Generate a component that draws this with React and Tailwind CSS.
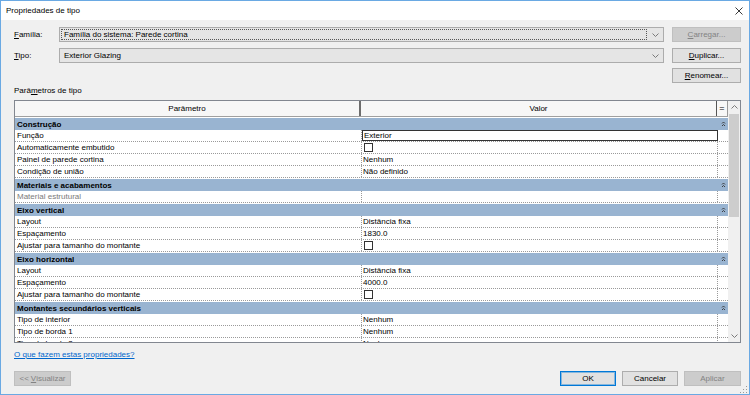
import React from 'react'

const groups = [
  {
    title: 'Construção',
    rows: [
      { label: 'Função', value: 'Exterior', selected: true },
      { label: 'Automaticamente embutido', check: true },
      { label: 'Painel de parede cortina', value: 'Nenhum' },
      { label: 'Condição de união', value: 'Não definido' },
    ],
  },
  {
    title: 'Materiais e acabamentos',
    rows: [{ label: 'Material estrutural', value: '', disabled: true }],
  },
  {
    title: 'Eixo vertical',
    rows: [
      { label: 'Layout', value: 'Distância fixa' },
      { label: 'Espaçamento', value: '1830.0' },
      { label: 'Ajustar para tamanho do montante', check: true },
    ],
  },
  {
    title: 'Eixo horizontal',
    rows: [
      { label: 'Layout', value: 'Distância fixa' },
      { label: 'Espaçamento', value: '4000.0' },
      { label: 'Ajustar para tamanho do montante', check: true },
    ],
  },
  {
    title: 'Montantes secundários verticais',
    rows: [
      { label: 'Tipo de interior', value: 'Nenhum' },
      { label: 'Tipo de borda 1', value: 'Nenhum' },
      { label: 'Tipo de borda 2', value: 'Nenhum' },
    ],
  },
]

const ChevronDown = () => (
  <svg width="7" height="4" viewBox="0 0 7 4" className="shrink-0">
    <path d="M0.5 0.5 L3.5 3.5 L6.5 0.5" fill="none" stroke="#7a7a7a" strokeWidth="1" />
  </svg>
)

const ChevronUp = () => (
  <svg width="7" height="4" viewBox="0 0 7 4">
    <path d="M0.5 3.5 L3.5 0.5 L6.5 3.5" fill="none" stroke="#7a7a7a" strokeWidth="1" />
  </svg>
)

// double chevron on group rows
const Collapse = () => (
  <svg width="5" height="6" viewBox="0 0 5 6">
    <path d="M1 2.5 L2.5 1 L4 2.5 M1 5 L2.5 3.5 L4 5" fill="none" stroke="#333" strokeWidth="0.9" />
  </svg>
)

const Button = ({ children, disabled, primary, className = '' }) => (
  <div
    className={`h-[15px] flex items-center justify-center border ${
      disabled
        ? 'bg-[#cccccc] border-[#bfbfbf] text-[#838383]'
        : primary
        ? 'bg-[#e1e1e1] border-[#0078d7] ring-1 ring-inset ring-[#0078d7]/40'
        : 'bg-[#e1e1e1] border-[#adadad]'
    } ${className}`}
  >
    {children}
  </div>
)

const Combo = ({ children, focused }) => (
  <div className="w-[605px] h-[15px] flex items-center bg-[#e5e5e5] border border-[#acacac] pr-[4px]">
    <div
      className={`flex-1 h-[11px] ml-[1px] mr-[5px] flex items-center pl-[2px] ${
        focused ? 'border border-dotted border-[#555]' : 'border border-transparent'
      }`}
    >
      {children}
    </div>
    <ChevronDown />
  </div>
)

const DataRow = ({ row }) => (
  <div className="h-[12px] flex shrink-0 border-b border-dotted border-[#9a9a9a] bg-white">
    <div
      className={`w-[347px] shrink-0 pl-[2px] leading-[11px] border-r border-dotted border-[#9a9a9a] ${
        row.disabled ? 'text-[#7a7a7a]' : ''
      }`}
    >
      {row.label}
    </div>
    {row.selected ? (
      <div className="w-[356px] shrink-0 pl-[1px] leading-[9px] border border-[#333]">{row.value}</div>
    ) : (
      <div className="w-[356px] shrink-0 pl-[1px] leading-[11px] border-r border-dotted border-[#9a9a9a] flex items-center">
        {row.check ? (
          <div className="w-[9px] h-[9px] ml-[1px] border border-[#333] bg-white" />
        ) : (
          row.value
        )}
      </div>
    )}
    <div className="flex-1" />
  </div>
)

const GroupRow = ({ title }) => (
  <div className="h-[13px] flex shrink-0 items-center bg-[#99b4d1] border-t border-white font-bold pl-[2px]">
    <div className="flex-1 leading-[11px]">{title}</div>
    <div className="w-[10px] flex justify-center">
      <Collapse />
    </div>
  </div>
)

export default function App() {
  return (
    <div className="w-[750px] h-[395px] flex flex-col overflow-hidden bg-[#f0f0f0] border border-[#6aa9e3] text-[8px] text-black font-['Liberation_Sans',Arial,sans-serif]">
      <div className="h-[19px] shrink-0 bg-white flex items-center justify-between pl-[5px] pr-[6px]">
        <span className="text-[8px]">Propriedades de tipo</span>
        <svg width="8" height="8" viewBox="0 0 8 8">
          <path d="M0.5 0.5 L7.5 7.5 M7.5 0.5 L0.5 7.5" stroke="#222" strokeWidth="0.9" />
        </svg>
      </div>

      <div className="flex flex-col pl-[13px] pr-[8px]">
        <div className="mt-[7px] h-[15px] flex items-center">
          <div className="w-[45px]">
            <span className="underline">F</span>amília:
          </div>
          <Combo focused>Família do sistema: Parede cortina</Combo>
          <Button disabled className="ml-[8px] w-[69px]">
            <span className="underline">C</span>arregar...
          </Button>
        </div>

        <div className="mt-[6px] h-[15px] flex items-center">
          <div className="w-[45px]">
            <span className="underline">T</span>ipo:
          </div>
          <Combo>Exterior Glazing</Combo>
          <Button className="ml-[8px] w-[69px]">
            <span className="underline">D</span>uplicar...
          </Button>
        </div>

        <div className="mt-[5px] h-[15px] flex justify-end">
          <Button className="w-[69px]">
            <span className="underline">R</span>enomear...
          </Button>
        </div>

        <div className="mt-[3px] h-[10px] leading-[10px]">
          Parâ<span className="underline">m</span>etros de tipo
        </div>

        <div className="mt-[4px] h-[243px] w-[727px] flex border border-[#828790] bg-white overflow-hidden">
          <div className="w-[713px] flex flex-col overflow-hidden">
            <div className="h-[16px] shrink-0 flex bg-[#f7f7f7] border-b border-[#a0a0a0]">
              <div className="w-[346px] flex items-center justify-center border-r-2 border-[#6d6d6d]">Parâmetro</div>
              <div className="w-[356px] flex items-center justify-center border-r border-[#555]">Valor</div>
              <div className="flex-1 flex items-center justify-center border-r border-[#999] text-[9px] leading-none">=</div>
            </div>
            {groups.map((g) => (
              <React.Fragment key={g.title}>
                <GroupRow title={g.title} />
                {g.rows.map((r, i) => (
                  <DataRow key={i} row={r} />
                ))}
              </React.Fragment>
            ))}
          </div>
          <div className="w-[12px] flex flex-col bg-[#f0f0f0]">
            <div className="h-[12px] flex items-center justify-center">
              <ChevronUp />
            </div>
            <div className="mt-[1px] h-[103px] mx-[1px] bg-[#cdcdcd]" />
            <div className="flex-1" />
            <div className="h-[12px] flex items-center justify-center">
              <ChevronDown />
            </div>
          </div>
        </div>

        <div className="mt-[7px] h-[10px] leading-[10px] text-[#0066cc] underline">
          O que fazem estas propriedades?
        </div>

        <div className="mt-[11px] h-[15px] flex">
          <Button disabled className="w-[57px]">
            &lt;&lt; <span className="underline ml-[2px]">V</span>isualizar
          </Button>
          <div className="flex-1" />
          <Button primary className="w-[56px]">OK</Button>
          <Button className="ml-[6px] w-[56px]">Cancelar</Button>
          <Button disabled className="ml-[6px] w-[57px]">Aplicar</Button>
        </div>
      </div>

      <div className="flex-1 flex justify-end items-end pr-[1px] pb-[1px]">
        <svg width="8" height="8" viewBox="0 0 8 8">
          <rect x="6" y="0" width="1" height="1" fill="#999" />
          <rect x="6" y="3" width="1" height="1" fill="#999" />
          <rect x="3" y="3" width="1" height="1" fill="#999" />
          <rect x="6" y="6" width="1" height="1" fill="#999" />
          <rect x="3" y="6" width="1" height="1" fill="#999" />
          <rect x="0" y="6" width="1" height="1" fill="#999" />
        </svg>
      </div>
    </div>
  )
}
